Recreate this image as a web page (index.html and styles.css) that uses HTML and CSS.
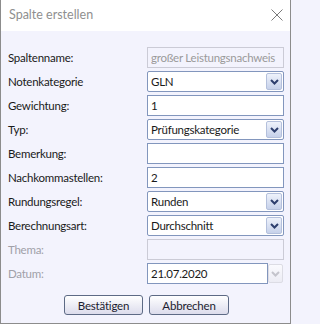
FILE: index.html
```html
<!DOCTYPE html>
<html>
<head>
<meta charset="utf-8">
<link rel="stylesheet" href="styles.css">
</head>
<body>
<div class="window">
  <div class="titlebar">
    <span class="title">Spalte erstellen</span>
    <svg class="close" width="12" height="12" viewBox="0 0 12 12"><path d="M0.5 0.5 L11.5 11.5 M11.5 0.5 L0.5 11.5" stroke="#7a7a7a" stroke-width="1" fill="none"/></svg>
  </div>
  <div class="content">
    <div class="form">
      <div class="label">Spaltenname:</div>
      <div class="box disabled"><span class="val grey">großer Leistungsnachweis</span></div>

      <div class="label">Notenkategorie</div>
      <div class="box select"><span class="val">GLN</span><span class="dd"><svg width="9" height="6" viewBox="0 0 9 6"><path d="M1 1 L4.5 4.5 L8 1" stroke="#2e3f6e" stroke-width="2" fill="none"/></svg></span></div>

      <div class="label">Gewichtung:</div>
      <div class="box"><span class="val">1</span></div>

      <div class="label">Typ:</div>
      <div class="box select"><span class="val">Prüfungskategorie</span><span class="dd"><svg width="9" height="6" viewBox="0 0 9 6"><path d="M1 1 L4.5 4.5 L8 1" stroke="#2e3f6e" stroke-width="2" fill="none"/></svg></span></div>

      <div class="label">Bemerkung:</div>
      <div class="box"><span class="val"></span></div>

      <div class="label">Nachkommastellen:</div>
      <div class="box"><span class="val">2</span></div>

      <div class="label">Rundungsregel:</div>
      <div class="box select"><span class="val">Runden</span><span class="dd"><svg width="9" height="6" viewBox="0 0 9 6"><path d="M1 1 L4.5 4.5 L8 1" stroke="#2e3f6e" stroke-width="2" fill="none"/></svg></span></div>

      <div class="label">Berechnungsart:</div>
      <div class="box select"><span class="val">Durchschnitt</span><span class="dd"><svg width="9" height="6" viewBox="0 0 9 6"><path d="M1 1 L4.5 4.5 L8 1" stroke="#2e3f6e" stroke-width="2" fill="none"/></svg></span></div>

      <div class="label dim">Thema:</div>
      <div class="box disabled"><span class="val"></span></div>

      <div class="label dim">Datum:</div>
      <div class="datum">
        <div class="box date"><span class="val">21.07.2020</span></div>
        <span class="dd off"><svg width="9" height="6" viewBox="0 0 9 6"><path d="M1 1 L4.5 4.5 L8 1" stroke="#c4c4cc" stroke-width="2" fill="none"/></svg></span>
      </div>
    </div>
    <div class="buttons">
      <button class="btn ok">Bestätigen</button>
      <button class="btn cancel">Abbrechen</button>
    </div>
  </div>
</div>
</body>
</html>
```

FILE: styles.css
```css
html, body {
  margin: 0;
  padding: 0;
  background: #f3f3fd;
}
.window {
  width: 291px;
  height: 324px;
  box-sizing: border-box;
  border-left: 1px solid #8c8c8c;
  border-right: 1px solid #8c8c8c;
  border-bottom: 1px solid #8c8c8c;
  font-family: Lato, "Noto Sans", sans-serif;
  font-size: 11.5px;
  letter-spacing: -0.25px;
  color: #1a1a1a;
  display: flex;
  flex-direction: column;
  overflow: hidden;
}
.titlebar {
  height: 31px;
  background: #ffffff;
  display: flex;
  align-items: center;
  justify-content: space-between;
  padding: 0 7px 0 8px;
  box-sizing: border-box;
  flex: none;
}
.title {
  color: #8f8f8f;
  font-size: 12.5px;
  letter-spacing: 0;
  position: relative;
  top: -1px;
}
.close {
  display: block;
  margin-top: -1px;
}
.content {
  flex: 1;
  background: #f3f3fd;
  padding: 16px 6px 0 7px;
}
.form {
  display: grid;
  grid-template-columns: 139px 137px;
  grid-auto-rows: 21px;
  row-gap: 3px;
}
.label {
  display: flex;
  align-items: center;
  color: #1a1a1a;
}
.label.dim {
  color: #a0a0a8;
}
.box {
  box-sizing: border-box;
  height: 21px;
  border: 1px solid #8296bd;
  background: #ffffff;
  display: flex;
  align-items: center;
  padding: 0 1px 0 3px;
}
.box.select {
  border-radius: 2px;
}
.box.disabled {
  border-color: #cbcbd6;
  background: #f3f3fd;
}
.val {
  flex: 1;
  white-space: nowrap;
  overflow: hidden;
}
.val.grey {
  color: #9a9a9a;
}
.dd {
  width: 16px;
  height: 17px;
  box-sizing: border-box;
  border: 1px solid #b4c0dc;
  border-radius: 2px;
  background: linear-gradient(#eef2fb, #c6d1ea);
  display: flex;
  align-items: center;
  justify-content: center;
  flex: none;
}
.dd svg {
  display: block;
}
.datum {
  display: flex;
  align-items: center;
}
.box.date {
  width: 121px;
}
.dd.off {
  width: 15px;
  height: 19px;
  border-color: #dcdce4;
  background: linear-gradient(#fafafe, #ececf4);
}
.buttons {
  display: flex;
  justify-content: center;
  gap: 6px;
  margin-top: 11px;
  padding-left: 1px;
}
.btn {
  font-family: Lato, "Noto Sans", sans-serif;
  font-size: 11.5px;
  letter-spacing: -0.2px;
  color: #1c1c30;
  height: 20px;
  box-sizing: border-box;
  border: 1px solid #5d6a85;
  border-radius: 3px;
  background: linear-gradient(#ffffff, #dcdcec);
  padding: 0;
  display: flex;
  align-items: center;
  justify-content: center;
}
.btn.ok {
  width: 79px;
}
.btn.cancel {
  width: 80px;
}
```
